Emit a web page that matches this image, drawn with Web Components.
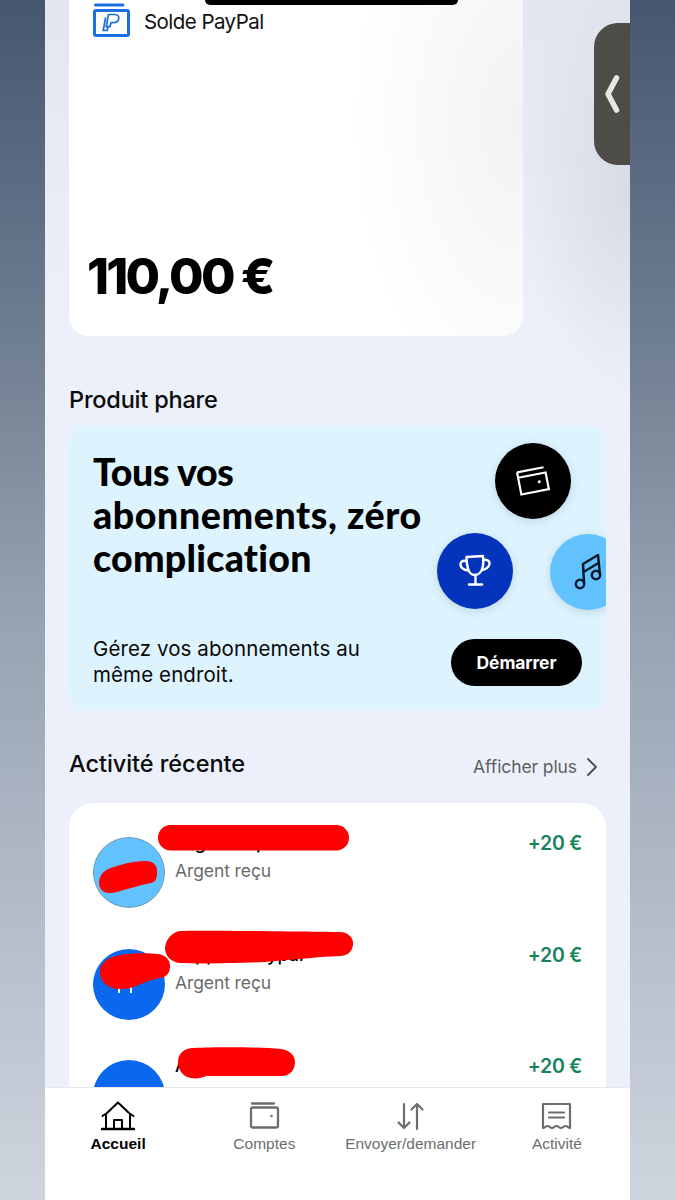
<!DOCTYPE html>
<html lang="fr"><head><meta charset="utf-8"><title>PayPal</title>
<style>
html,body{margin:0;padding:0;height:1200px;overflow:hidden}
body{font-family:"Liberation Sans",Arial,sans-serif;color:#000}
</style></head><body>
<pp-app>
  <pp-balance-card label="Solde PayPal" amount="110,00 €"></pp-balance-card>
  <pp-heading>Produit phare</pp-heading>
  <pp-banner></pp-banner>
  <pp-section-head title="Activité récente" link="Afficher plus"></pp-section-head>
  <pp-activity-list>
    <pp-activity-row name="xxgxxxxxpxxxx" color="#62c2ff" ring amount="+20 €"></pp-activity-row>
    <pp-activity-row name="xxppxxxxxypal" color="#0a68ee" marks amount="+20 €"></pp-activity-row>
    <pp-activity-row name="A" color="#0a68ee" amount="+20 €"></pp-activity-row>
  </pp-activity-list>
</pp-app>
<script>
function def(name, css, html){
  customElements.define(name, class extends HTMLElement{
    connectedCallback(){
      if(this.shadowRoot) return;
      const s=this.attachShadow({mode:'open'});
      const a=k=>this.getAttribute(k)||'';
      const h=k=>this.hasAttribute(k);
      s.innerHTML='<style>'+css+'</style>'+(typeof html==='function'?html(a,h):html);
    }
  });
}
const SANS='"Liberation Sans",Arial,sans-serif';
const UI='Inter,"Liberation Sans",sans-serif';

def('pp-app',`
:host{display:flex;justify-content:center;position:relative;width:675px;height:1200px;overflow:hidden;
background:linear-gradient(180deg,#45576f 0,#5b6a81 170px,#717f92 350px,#97a3b2 620px,#b2bbc8 900px,#cfd5de 1200px)}
.phone{width:585px;height:1200px;display:flex;flex-direction:column;
background:
 radial-gradient(110px 220px at 100% 180px,#d6dbe6 0,rgba(214,219,230,0) 100%),
 linear-gradient(180deg,#e3e6ef 0,#ebf0fb 330px)}
main{height:1087px;overflow:hidden;padding:0 24px;box-sizing:border-box;flex:none}
`,`<div class="phone"><main><slot></slot></main><pp-nav></pp-nav></div>
<pp-notch></pp-notch><pp-side-handle></pp-side-handle><pp-redactions></pp-redactions>`);

def('pp-notch',`:host{position:absolute;left:205px;top:0;width:253px;height:5px;background:#000;border-radius:0 0 14px 14px}`,``);

def('pp-side-handle',`:host{position:absolute;left:594px;top:23px;width:36px;height:142px;background:#4d4c47;border-radius:24px 0 0 24px;display:block}
svg{position:absolute;left:9px;top:50px}`,
`<svg width="18" height="42" viewBox="0 0 18 42"><path d="M13.500 5 5 21l8.500 16" fill="none" stroke="#e6e6e2" stroke-width="5.500" stroke-linecap="round" stroke-linejoin="round"/></svg>`);

def('pp-redactions',`:host{position:absolute;left:0;top:0;width:675px;height:1087px;display:block;pointer-events:none;overflow:hidden}svg{display:block}`,
`<svg width="675" height="1087" viewBox="0 0 675 1087" fill="#ff0000">
<rect x="158" y="825" width="191" height="25.500" rx="12.500"/>
<path d="M99 882C100 873 106 869 114 867 125 863 137 861 146 861 154 861 158 866 157 873 157 879 155 882 151 883 140 885 128 889 117 892 107 895 99 892 99 882z"/>
<path d="M165 948c1-10 8-16 15-17 25-1 140 1 160 1 9 0 14 7 13 13-1 7-6 11-13 11-25 1-50 4-75 6-25 1-55 2-85 1-9-1-15-7-15-15z"/>
<path d="M100 972c0-10 9-15 20-17 12-2 28-2 38-1 8 1 12 6 12 12 0 7-3 11-10 12-10 2-18 5-26 9-6 2-12 2-18 2-10-2-16-8-16-17z"/>
<path d="M178 1062c0-9 7-14 15-14 25-1 68-1 88 1 8 1 14 6 14 13 0 8-5 14-14 14-25 0-55 0-75 0-5 3-14 3-19 1-6-3-9-9-9-15z"/>
</svg>`);

def('pp-balance-card',`
:host{display:block;width:454px;height:356px;margin-top:-20px;box-sizing:border-box;padding:23px 0 0 24px;border-radius:20px;position:relative;
background:radial-gradient(170px 300px at 100% 140px,#f2f2f2 0,rgba(255,255,255,0) 100%),#fff}
.top{display:flex;align-items:center;gap:13px;height:33px}
.lbl{font:400 20.500px/28px ${UI};letter-spacing:-.55px;color:#111;margin-top:4px}
.amt{position:absolute;left:18px;top:266px;font:800 50px/60px ${UI};letter-spacing:-2.800px;color:#000;white-space:nowrap}
svg{flex:none;display:block}
`,a=>`<div class="top"><svg width="38" height="34" viewBox="0 0 38 34" fill="none" stroke="#1a6fdf" stroke-width="3" stroke-linejoin="round" stroke-linecap="round">
<path d="M2.500 2H30"/><rect x="1.500" y="7.500" width="34" height="25" rx="1.500"/>
<path d="M15.500 11.500h6c3.500 0 4.800 2 4.200 4.500-.6 2.500-2.700 3.700-5.200 3.700h-2.500l-1 4h-3.800z" stroke-width="1.700"/>
<path d="M12.500 15l-2.300 12.500h4l.8-3.800" stroke-width="1.700"/></svg>
<span class="lbl">${a('label')}</span></div><div class="amt">${a('amount')}</div>`);

def('pp-heading',`:host{display:block;margin:50px 0 11px;font:500 23.500px/28px ${UI};letter-spacing:-.2px;color:#0b0b0b}`,`<slot></slot>`);

def('pp-banner',`
:host{display:flex;flex-direction:column;position:relative;height:286px;box-sizing:border-box;padding:25px 24px 23px;background:#ddf4ff;border-radius:20px;overflow:hidden}
h2{margin:0;flex:1;font:900 37.500px/43px Lato,${SANS};color:#000;width:345px}
h2 span{display:block;white-space:nowrap}
.bottom{display:flex;justify-content:space-between;align-items:center}
p{margin:0;font:400 20.500px/26px ${UI};letter-spacing:.1px;color:#0a0a0a;width:300px}
.btn{flex:none;width:131px;height:47px;margin-top:1px;border-radius:24px;background:#000;color:#fff;display:flex;align-items:center;justify-content:center;font:700 17.500px/20px ${UI};letter-spacing:-.1px}
.c{position:absolute;width:76px;height:76px;border-radius:50%;display:flex;align-items:center;justify-content:center;box-shadow:0 2px 8px rgba(30,50,80,.16)}
.a{left:426px;top:18px;background:#000}.b{left:368px;top:108px;background:#0334bb}.d{left:481px;top:109px;background:#62c2ff}
svg{display:block;fill:none;stroke-linecap:round;stroke-linejoin:round}
`,`<h2><span style="letter-spacing:-.35px">Tous vos</span> <span style="letter-spacing:.6px">abonnements, zéro</span> <span style="letter-spacing:.25px">complication</span></h2>
<div class="bottom"><p>Gérez vos abonnements au même endroit.</p><span class="btn">Démarrer</span></div>
<span class="c a"><svg width="38" height="36" viewBox="0 0 38 36" stroke="#fff" stroke-width="2.200"><g transform="rotate(-11 19 18)" stroke-linecap="butt" stroke-linejoin="miter"><path d="M5 6.500h27"/><path d="M5 6.500V29h28V12H5"/><circle cx="25" cy="20" r="1.500" fill="#fff" stroke="none"/></g></svg></span>
<span class="c b"><svg width="34" height="36" viewBox="0 0 34 36" stroke="#fff" stroke-width="2.400"><path d="M8.500 4l16.500-1c.5 5 .5 9-.5 12-1 4-4 7-7.500 7s-6-2.500-7-6.500C9 12.500 8.500 9 8.500 4z"/><path d="M8.500 8C4.500 7 2 9 2.500 12c.5 3 4 5 8 5.500"/><path d="M25 7c4-1 7 1 6.500 4-.5 3-4 5.500-7.500 6"/><path d="M17.500 22v8"/><path d="M11 31.500h13"/></svg></span>
<span class="c d"><svg width="34" height="38" viewBox="0 0 34 38" stroke="#0b1a2a" stroke-width="2.500"><circle cx="9" cy="31" r="4.200"/><circle cx="25" cy="22" r="4.200"/><path d="M13 30 12 11 27 2l2 20"/><path d="M12.500 19 27.500 10"/></svg></span>`);

def('pp-section-head',`
:host{display:flex;justify-content:space-between;align-items:center;height:28px;margin:39px 0 25px}
b{font:500 23.500px/28px ${UI};letter-spacing:-.05px;color:#0b0b0b}
span{display:flex;align-items:center;gap:9px;font:400 17.500px/24px ${UI};color:#5f5f5f;letter-spacing:-.1px;margin-right:8px;margin-top:5px}
svg{display:block}
`,a=>`<b>${a('title')}</b><span>${a('link')}<svg width="12" height="20" viewBox="0 0 12 20" fill="none" stroke="#4a4a4a" stroke-width="1.800" stroke-linecap="round" stroke-linejoin="round"><path d="M2 2l8 8-8 8"/></svg></span>`);

def('pp-activity-list',`:host{display:block;background:#fff;border-radius:24px;padding-top:30px;height:400px}`,`<slot></slot>`);

def('pp-activity-row',`
:host{display:flex;align-items:flex-start;gap:10px;height:111.500px;padding:0 24px}
.av{flex:none;width:72px;height:71px;border-radius:50%;margin-top:4px;position:relative;box-sizing:border-box}
.ring{border:1px solid #6f9db8}
.t{flex:1;min-width:0}
.n{font:500 18px/24px ${UI};color:#000;height:24px;white-space:nowrap;margin-top:-2px}
.s{font:400 17.500px/24px ${UI};color:#6b6b6b;letter-spacing:-.1px;margin-top:4px}
.m{font:600 19.500px/24px ${UI};color:#16835a;margin-top:-2px;letter-spacing:-.3px}
i{position:absolute;top:37px;width:2px;height:7px;background:#fff}
`,(a,h)=>`<span class="av${h('ring')?' ring':''}" style="background:${a('color')}">${h('marks')?'<i style="left:25px"></i><i style="left:37px"></i>':''}</span><div class="t"><div class="n">${a('name')}</div><div class="s">Argent reçu</div></div><div class="m">${a('amount')}</div>`);

def('pp-nav',`
:host{flex:1;display:grid;grid-template-columns:repeat(4,1fr);background:#fff;border-top:1px solid #e6e8ee;box-sizing:border-box;padding-top:13px;align-items:start;position:relative;z-index:1}
`,`<pp-nav-item label="Accueil" active><svg width="34" height="30" viewBox="0 0 34 30" fill="none" stroke="#000" stroke-width="2" stroke-linejoin="round" stroke-linecap="round"><path d="M1.500 15 6 12 17 1.500 28 12l4.500 3"/><path d="M5 13v15M29 13v15"/><path d="M1 28h32" stroke-width="2.600"/><path d="M13 28v-9h8v9"/></svg></pp-nav-item>
<pp-nav-item label="Comptes"><svg width="34" height="30" viewBox="0 0 34 30" fill="none" stroke="#6d6d6d" stroke-width="2.300" stroke-linejoin="round" stroke-linecap="round"><path d="M5 2.500h22"/><rect x="4" y="6.500" width="27" height="20" rx="2"/><circle cx="24.500" cy="15" r="1.300" fill="#6d6d6d" stroke="none"/></svg></pp-nav-item>
<pp-nav-item label="Envoyer/demander"><svg width="34" height="30" viewBox="0 0 34 30" fill="none" stroke="#6d6d6d" stroke-width="2.200" stroke-linejoin="round" stroke-linecap="round"><path d="M10 3v24M4.500 21.500 10 27l5.500-5.500"/><path d="M23 28V3M17.500 8.500 23 3l5.500 5.500"/></svg></pp-nav-item>
<pp-nav-item label="Activité"><svg width="34" height="30" viewBox="0 0 34 30" fill="none" stroke="#6d6d6d" stroke-width="2.200" stroke-linejoin="round" stroke-linecap="round"><path d="M3 27V3h27v24c-2.200 0-2.200-2-4.500-2s-2.300 2-4.500 2-2.300-2-4.500-2-2.300 2-4.500 2-2.300-2-4.500-2S5.200 27 3 27z"/><path d="M9 11.500h15M9 16.500h15"/></svg></pp-nav-item>`);

def('pp-nav-item',`
:host{display:flex;flex-direction:column;align-items:center;gap:3px;font:400 15.500px/20px ${SANS};color:#6d6d6d;white-space:nowrap}
:host([active]){font-weight:700;color:#000}
::slotted(svg){display:block}
`,a=>`<slot></slot><span>${a('label')}</span>`);
</script>
</body></html>
